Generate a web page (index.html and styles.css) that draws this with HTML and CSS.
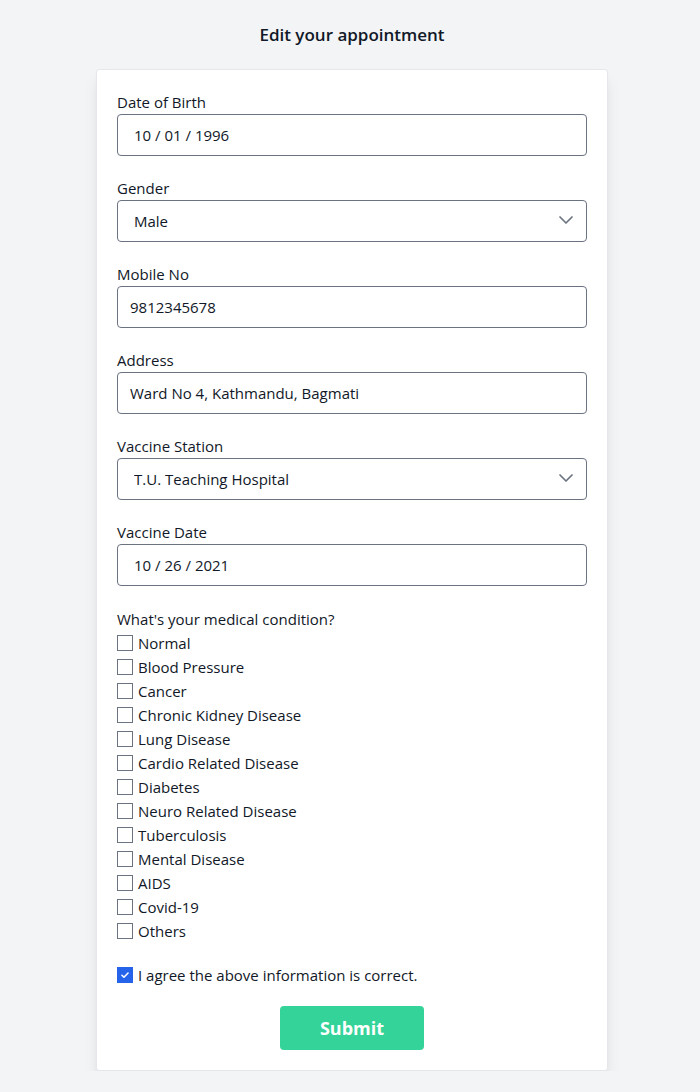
FILE: index.html
```html
<!DOCTYPE html>
<html lang="en">
<head>
<meta charset="utf-8">
<title>Edit your appointment</title>
<link rel="stylesheet" href="styles.css">
</head>
<body>
<main class="page">
  <h1 class="title">Edit your appointment</h1>
  <form class="card">
    <div class="field">
      <label class="label">Date of Birth</label>
      <input class="input input-date" type="text" value="10 / 01 / 1996">
    </div>
    <div class="field">
      <label class="label">Gender</label>
      <div class="select-wrap">
        <select class="input select"><option>Male</option><option>Female</option></select>
        <svg class="chevron" width="24" height="24" viewBox="0 0 20 20" fill="none"><path d="M5 7.5l5 5 5-5" stroke="#6b7280" stroke-width="1.4" stroke-linecap="round" stroke-linejoin="round"/></svg>
      </div>
    </div>
    <div class="field">
      <label class="label">Mobile No</label>
      <input class="input" type="text" value="9812345678">
    </div>
    <div class="field">
      <label class="label">Address</label>
      <input class="input" type="text" value="Ward No 4, Kathmandu, Bagmati">
    </div>
    <div class="field">
      <label class="label">Vaccine Station</label>
      <div class="select-wrap">
        <select class="input select"><option>T.U. Teaching Hospital</option></select>
        <svg class="chevron" width="24" height="24" viewBox="0 0 20 20" fill="none"><path d="M5 7.5l5 5 5-5" stroke="#6b7280" stroke-width="1.4" stroke-linecap="round" stroke-linejoin="round"/></svg>
      </div>
    </div>
    <div class="field">
      <label class="label">Vaccine Date</label>
      <input class="input input-date" type="text" value="10 / 26 / 2021">
    </div>
    <div class="conditions">
      <p class="label">What's your medical condition?</p>
      <label class="check"><input type="checkbox" class="box"><span>Normal</span></label>
      <label class="check"><input type="checkbox" class="box"><span>Blood Pressure</span></label>
      <label class="check"><input type="checkbox" class="box"><span>Cancer</span></label>
      <label class="check"><input type="checkbox" class="box"><span>Chronic Kidney Disease</span></label>
      <label class="check"><input type="checkbox" class="box"><span>Lung Disease</span></label>
      <label class="check"><input type="checkbox" class="box"><span>Cardio Related Disease</span></label>
      <label class="check"><input type="checkbox" class="box"><span>Diabetes</span></label>
      <label class="check"><input type="checkbox" class="box"><span>Neuro Related Disease</span></label>
      <label class="check"><input type="checkbox" class="box"><span>Tuberculosis</span></label>
      <label class="check"><input type="checkbox" class="box"><span>Mental Disease</span></label>
      <label class="check"><input type="checkbox" class="box"><span>AIDS</span></label>
      <label class="check"><input type="checkbox" class="box"><span>Covid-19</span></label>
      <label class="check"><input type="checkbox" class="box"><span>Others</span></label>
    </div>
    <label class="check agree"><input type="checkbox" class="box" checked><span>I agree the above information is correct.</span></label>
    <div class="actions">
      <button type="button" class="submit">Submit</button>
    </div>
  </form>
</main>
</body>
</html>
```

FILE: styles.css
```css
* { box-sizing: border-box; }
html, body { margin: 0; padding: 0; }
body {
  background: #f3f4f6;
  font-family: "Open Sans", "Noto Sans", sans-serif;
  color: #111827;
  font-size: 15px;
}
.page {
  display: flex;
  flex-direction: column;
  align-items: center;
  padding-top: 21px;
  padding-left: 4px;
}
.title {
  margin: 0 0 20px;
  font-size: 17px;
  line-height: 28px;
  font-weight: 600;
  color: #111827;
}
.card {
  width: 512px;
  background: #fff;
  border: 1px solid #e5e7eb;
  border-radius: 3px;
  box-shadow: 0 10px 15px -3px rgba(0,0,0,0.1), 0 4px 6px -2px rgba(0,0,0,0.05);
  padding: 21px 20px 20px;
  display: flex;
  flex-direction: column;
}
.field {
  display: flex;
  flex-direction: column;
  margin-bottom: 21px;
}
.label {
  margin: 0;
  display: block;
  line-height: 23px;
  font-size: 15px;
  color: #111827;
}
.input {
  width: 100%;
  height: 42px;
  border: 1px solid #6b7280;
  border-radius: 4px;
  padding: 0 12px;
  font-family: inherit;
  font-size: 15px;
  color: #111827;
  background: #fff;
  outline: none;
}
.input-date { padding-left: 16px; }
.select-wrap { position: relative; }
.select {
  appearance: none;
  -webkit-appearance: none;
  padding-left: 16px;
}
.chevron {
  position: absolute;
  right: 9px;
  top: 8px;
  pointer-events: none;
}
.conditions {
  display: flex;
  flex-direction: column;
  margin-bottom: 20px;
}
.conditions .label { line-height: 24px; }
.check {
  display: flex;
  align-items: center;
  height: 24px;
  line-height: 24px;
  font-size: 15px;
}
.box {
  appearance: none;
  -webkit-appearance: none;
  width: 16px;
  height: 16px;
  margin: 0 5px 0 0;
  border: 1px solid #6b7280;
  border-radius: 0;
  background: #fff;
  flex-shrink: 0;
}
.box:checked {
  background-color: #2563eb;
  border-color: #2563eb;
  background-image: url("data:image/svg+xml,%3Csvg viewBox='0 0 16 16' xmlns='http://www.w3.org/2000/svg'%3E%3Cpath d='M4.5 8.3l2.3 2.3 4.7-4.9' fill='none' stroke='white' stroke-width='1.8' stroke-linecap='round' stroke-linejoin='round'/%3E%3C/svg%3E");
  background-size: 100% 100%;
}
.agree { margin-bottom: 19px; }
.actions {
  display: flex;
  justify-content: center;
}
.submit {
  width: 144px;
  height: 44px;
  border: none;
  border-radius: 4px;
  background: #34d399;
  color: #fff;
  font-family: inherit;
  font-size: 18px;
  font-weight: 700;
}
```
